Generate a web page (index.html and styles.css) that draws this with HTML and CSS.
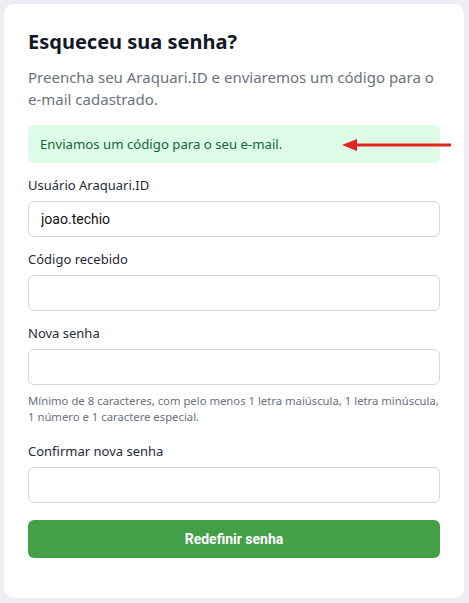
FILE: index.html
```html
<!DOCTYPE html>
<html lang="pt-BR">
<head>
<meta charset="utf-8">
<title>Esqueceu sua senha?</title>
<link rel="stylesheet" href="styles.css">
</head>
<body>
<main class="card">
  <h1 class="title">Esqueceu sua senha?</h1>
  <p class="subtitle">Preencha seu Araquari.ID e enviaremos um código para o e-mail cadastrado.</p>
  <div class="alert">
    <span>Enviamos um código para o seu e-mail.</span>
    <svg class="arrow" width="110" height="14" viewBox="0 0 110 14" aria-hidden="true">
      <rect x="12" y="5.5" width="97" height="3" fill="#e32222"/>
      <polygon points="0,7 15,1 15,13" fill="#e32222"/>
    </svg>
  </div>
  <form class="form">
    <div class="field">
      <label class="label">Usuário Araquari.ID</label>
      <input class="input" type="text" value="joao.techio">
    </div>
    <div class="field">
      <label class="label">Código recebido</label>
      <input class="input" type="text">
    </div>
    <div class="field">
      <label class="label">Nova senha</label>
      <input class="input" type="password">
      <p class="help">Mínimo de 8 caracteres, com pelo menos 1 letra maiúscula, 1 letra minúscula, 1 número e 1 caractere especial.</p>
    </div>
    <div class="field">
      <label class="label">Confirmar nova senha</label>
      <input class="input" type="password">
    </div>
    <button class="button" type="button">Redefinir senha</button>
  </form>
</main>
</body>
</html>
```

FILE: styles.css
```css
* { box-sizing: border-box; }
html, body { margin: 0; }
body {
  background: #eceef3;
  padding: 4px;
  font-family: "Noto Sans", "Open Sans", sans-serif;
  color: #1f2937;
}
.card {
  width: 460px;
  background: #fff;
  border-radius: 10px;
  padding: 24px 24px 40px 24px;
}
.title {
  margin: 0;
  font-size: 20px;
  line-height: 28px;
  font-weight: 700;
  color: #111827;
}
.subtitle {
  margin: 10px 0 0;
  font-size: 15px;
  line-height: 22px;
  color: #6b7280;
}
.alert {
  position: relative;
  margin-top: 15px;
  height: 38px;
  display: flex;
  align-items: center;
  padding: 0 12px;
  background: #dcfce7;
  color: #166534;
  border-radius: 6px;
  font-size: 13.2px;
}
.arrow {
  position: absolute;
  left: 314px;
  top: 13px;
}
.form {
  display: flex;
  flex-direction: column;
  margin-top: 12px;
}
.field {
  display: flex;
  flex-direction: column;
  margin-bottom: 12px;
}
.label {
  font-size: 13px;
  line-height: 21px;
  margin-bottom: 5px;
  color: #1f2937;
}
.input {
  height: 36px;
  border: 1px solid #d4d6dc;
  border-radius: 6px;
  padding: 0 12px;
  font-family: "Roboto", "Liberation Sans", sans-serif;
  font-size: 14px;
  font-weight: 400;
  color: #111111;
  background: #fff;
}
.help {
  margin: 8px 0 4px;
  font-size: 11.3px;
  line-height: 16px;
  color: #6b7280;
}
.button {
  margin-top: 5px;
  height: 38px;
  border: 0;
  border-radius: 6px;
  background: #43a047;
  color: #fff;
  font-family: "Roboto", "Liberation Sans", sans-serif;
  font-weight: 700;
  font-size: 14px;
}
```
